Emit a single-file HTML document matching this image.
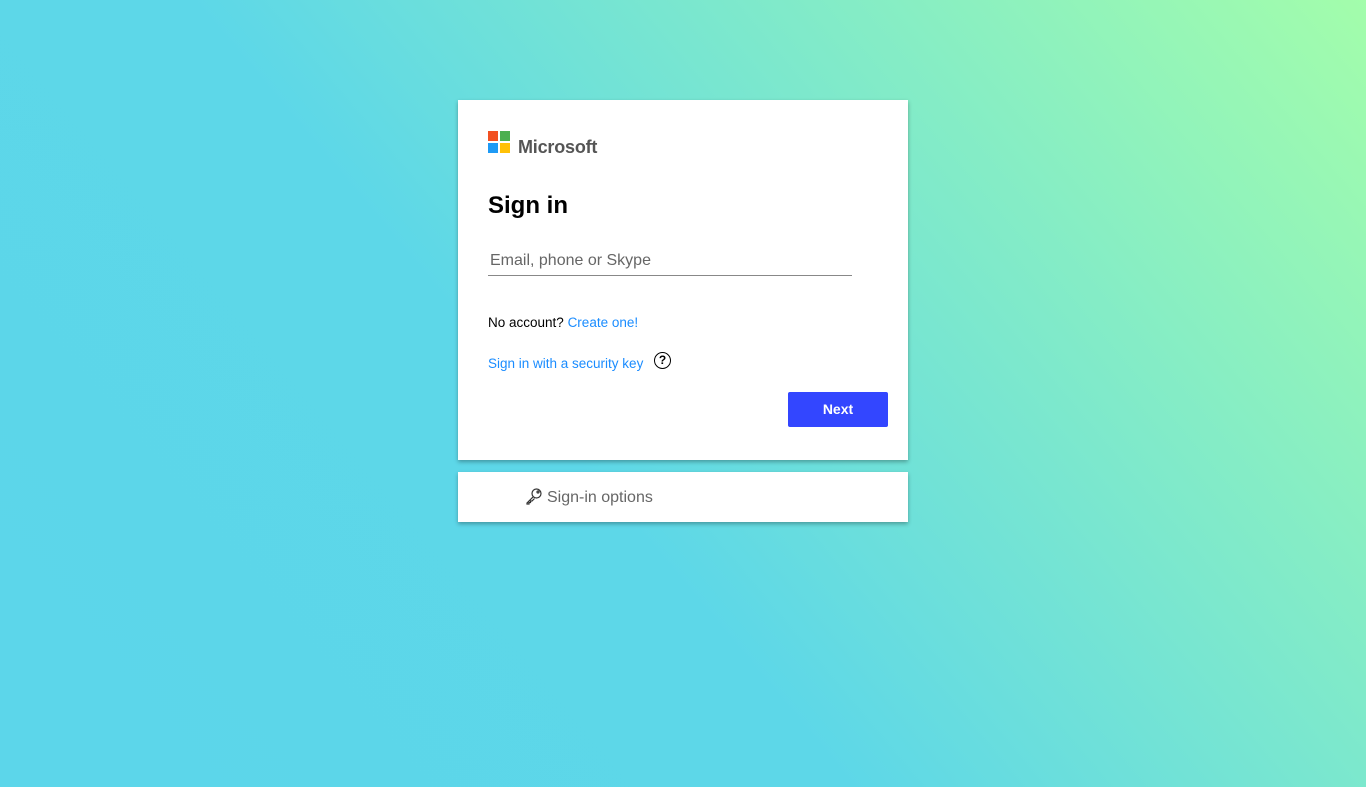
<!DOCTYPE html>
<html><head><meta charset="utf-8"><style>
html,body{margin:0;height:787px;width:1366px;overflow:hidden}
body{background:linear-gradient(50deg,#5cd6ea 0%,#5dd7e8 42%,#a3fdab 100%);font-family:"Liberation Sans",Arial,sans-serif;position:relative}
.card{position:absolute;left:458px;background:#fff;width:450px;box-shadow:0 2px 4px rgba(0,0,0,.3)}
.c1{top:100px;height:360px}
.c2{top:472px;height:50px}
.logo{position:absolute;left:30px;top:31px}
.logo i{position:absolute;width:10px;height:10px}
.ms{position:absolute;left:60px;top:37px;font-size:18px;font-weight:bold;color:#555;letter-spacing:-0.2px}
h1{position:absolute;left:30px;top:92px;margin:0;font-size:24px;font-weight:bold;color:#000}
.inp{position:absolute;left:30px;top:151px;width:364px;height:25px;border-bottom:1px solid #888;font-size:16px;color:#666;padding-left:2px;padding-top:1px;box-sizing:border-box}
.na{position:absolute;left:30px;top:215px;font-size:13.5px;color:#000}
a{color:#1a8cff;text-decoration:none}
.sk{position:absolute;left:30px;top:256px;font-size:13.5px}
.q{position:absolute;left:196px;top:252px;width:15px;height:15px;border:1.6px solid #000;border-radius:50%;font-size:12px;font-weight:bold;text-align:center;line-height:15px}
.btn{position:absolute;left:330px;top:292px;width:100px;height:35px;background:#3346ff;color:#fff;font-size:14px;font-weight:bold;text-align:center;line-height:35px;border-radius:2px}
.so{position:absolute;left:89px;top:17px;font-size:16px;color:#666}
</style></head><body>
<div class="card c1">
<div class="logo"><i style="left:0;top:0;background:#f25022"></i><i style="left:12px;top:0;background:#4caf50"></i><i style="left:0;top:12px;background:#1e9af5"></i><i style="left:12px;top:12px;background:#ffc107"></i></div>
<div class="ms">Microsoft</div>
<h1>Sign in</h1>
<div class="inp">Email, phone or Skype</div>
<div class="na">No account? <a>Create one!</a></div>
<div class="sk"><a>Sign in with a security key</a></div>
<div class="q">?</div>
<div class="btn">Next</div>
</div>
<div class="card c2">
<svg style="position:absolute;left:67px;top:15px" width="18" height="18" viewBox="0 0 18 18" fill="none" stroke="#333" stroke-width="1.2"><circle cx="11.5" cy="6.5" r="4.5"/><circle cx="13" cy="5" r="1"/><path d="M8.3 9.7 L2 16 L2 17 L4 17 L4 15.5 L5.5 15.5 L5.5 14 L7 14 L9.5 11.5"/></svg>
<div class="so">Sign-in options</div>
</div>
</body></html>
